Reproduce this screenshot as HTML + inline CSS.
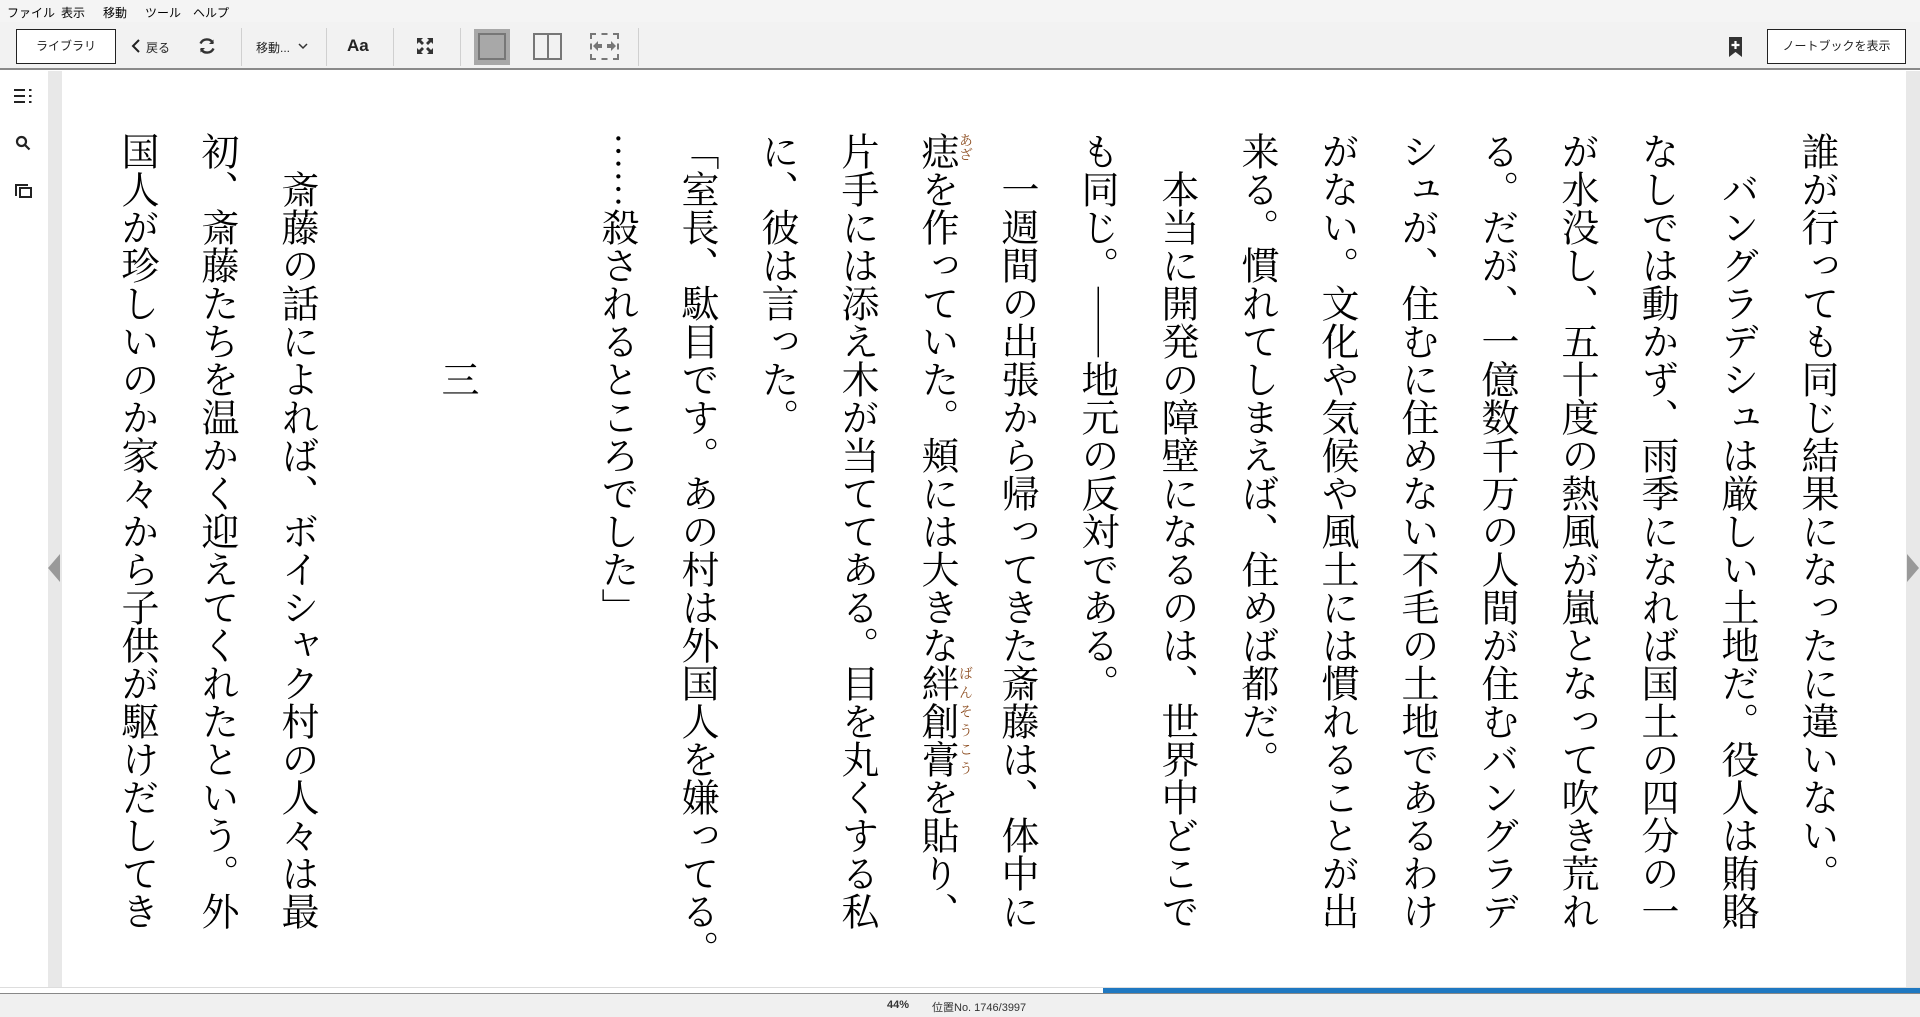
<!DOCTYPE html>
<html><head><meta charset="utf-8">
<style>
*{margin:0;padding:0;box-sizing:border-box}
body{width:1920px;height:1017px;overflow:hidden;background:#fff;font-family:"Liberation Sans","Noto Sans CJK JP",sans-serif;position:relative}
.menu{position:absolute;left:0;top:0;width:1920px;height:22px;background:#f4f4f4;font-size:12px;color:#000}
.menu span{position:absolute;top:4px}
.tb{position:absolute;left:0;top:22px;width:1920px;height:48px;background:#f2f2f2;border-bottom:2px solid #8a8a8a}
.btn{position:absolute;top:7px;height:35px;border:1px solid #222;background:#fff;font-size:12px;text-align:center;line-height:33px;color:#222}
.sep{position:absolute;top:6px;width:1px;height:38px;background:#d0d0d0}
.t{position:absolute;font-size:12px;color:#222}
.side{position:absolute;left:0;top:71px;width:48px;height:917px;background:#fff}
.gs{position:absolute;background:#e8e8e8}
.text{position:absolute;top:132px;right:60px;writing-mode:vertical-rl;font-family:"Noto Serif CJK SC","Noto Serif CJK JP",serif;font-size:38px;line-height:80px;white-space:nowrap;color:#000;height:820px}
.rb{position:absolute;writing-mode:vertical-rl;font-family:"Noto Serif CJK SC",serif;font-size:14px;color:#8b4a1c;line-height:16px;white-space:nowrap}
</style></head><body>
<div class="menu"><span style="left:7px">ファイル</span><span style="left:61px">表示</span><span style="left:103px">移動</span><span style="left:145px">ツール</span><span style="left:193px">ヘルプ</span></div>
<div class="tb">
<div class="btn" style="left:16px;width:100px">ライブラリ</div>
<svg style="position:absolute;left:131px;top:17px" width="10" height="14" viewBox="0 0 10 14"><path d="M8 1L2 7l6 6" stroke="#222" stroke-width="2" fill="none"/></svg>
<div class="t" style="left:146px;top:17px">戻る</div>
<svg style="position:absolute;left:197px;top:14px" width="20" height="20" viewBox="0 0 20 20" fill="none" stroke="#333" stroke-width="2.4"><path d="M16 7A7 7 0 0 0 3.5 7.5"/><path d="M4 13a7 7 0 0 0 12.5-.5"/><path d="M16.5 3.5v4.5h-4.5z" fill="#333" stroke="none"/><path d="M3.5 16.5v-4.5h4.5z" fill="#333" stroke="none"/></svg>
<div class="sep" style="left:241px"></div>
<div class="t" style="left:256px;top:17px">移動...</div>
<svg style="position:absolute;left:298px;top:20px" width="10" height="8" viewBox="0 0 10 8"><path d="M1 2l4 4 4-4" stroke="#333" fill="none" stroke-width="1.5"/></svg>
<div class="sep" style="left:326px"></div>
<div class="t" style="left:347px;top:14px;font-size:17px;font-weight:bold">Aa</div>
<div class="sep" style="left:393px"></div>
<svg style="position:absolute;left:416px;top:15px" width="18" height="18" viewBox="0 0 18 18" fill="#333"><path d="M1 1h6l-2 2 3 3-2 2-3-3-2 2z"/><path d="M17 1v6l-2-2-3 3-2-2 3-3-2-2z"/><path d="M1 17v-6l2 2 3-3 2 2-3 3 2 2z"/><path d="M17 17h-6l2-2-3-3 2-2 3 3 2-2z"/></svg>
<div class="sep" style="left:460px"></div>
<div style="position:absolute;left:474px;top:7px;width:36px;height:36px;background:#a8a8a8"></div>
<div style="position:absolute;left:478px;top:11px;width:28px;height:27px;border:2px solid #777;background:#a8a8a8"></div>
<div style="position:absolute;left:533px;top:11px;width:29px;height:27px;border:2px solid #777"></div>
<div style="position:absolute;left:547px;top:11px;width:2px;height:27px;background:#777"></div>
<div style="position:absolute;left:590px;top:11px;width:29px;height:27px;border:2px dashed #777"></div>
<svg style="position:absolute;left:592px;top:18px" width="25" height="12" viewBox="0 0 25 12" fill="#777"><path d="M1 6l5-5v3h4v4H6v3z"/><path d="M24 6l-5-5v3h-4v4h4v3z"/></svg>
<div class="sep" style="left:638px"></div>
<svg style="position:absolute;left:1729px;top:15px" width="13" height="20" viewBox="0 0 13 20"><path d="M0 0h13v20l-6.5-5L0 20z" fill="#333"/><path d="M6.5 4v8M2.5 8h8" stroke="#fff" stroke-width="2.2"/></svg>
<div class="btn" style="left:1767px;width:139px">ノートブックを表示</div>
</div>
<div class="side"></div>
<svg style="position:absolute;left:14px;top:89px" width="20" height="14" viewBox="0 0 20 14" fill="#222"><rect x="0" y="0" width="11" height="2"/><rect x="0" y="6" width="11" height="2"/><rect x="0" y="12" width="11" height="2"/><rect x="15" y="0" width="2.5" height="2"/><rect x="15" y="6" width="2.5" height="2"/><rect x="15" y="12" width="2.5" height="2"/></svg>
<svg style="position:absolute;left:15px;top:135px" width="16" height="16" viewBox="0 0 16 16" fill="none" stroke="#222" stroke-width="2.2"><circle cx="6.5" cy="6.5" r="4.5"/><path d="M10 10l4.5 4.5"/></svg>
<svg style="position:absolute;left:15px;top:183px" width="17" height="15" viewBox="0 0 17 15" fill="none" stroke="#222" stroke-width="2"><path d="M1 13V2h12"/><rect x="5" y="5" width="11" height="9"/></svg>
<div class="gs" style="left:48px;top:71px;width:14px;height:917px"></div>
<div class="gs" style="left:1906px;top:71px;width:14px;height:917px"></div>
<svg style="position:absolute;left:47px;top:554px" width="14" height="28"><path d="M13 0v28L1 14z" fill="#999"/></svg>
<svg style="position:absolute;left:1906px;top:554px" width="14" height="28"><path d="M1 0v28l12-14z" fill="#999"/></svg>
<div class="text">誰が行っても同じ結果になったに違いない。<br>　バングラデシュは厳しい土地だ。役人は賄賂<br>なしでは動かず、雨季になれば国土の四分の一<br>が水没し、五十度の熱風が嵐となって吹き荒れ<br>る。だが、一億数千万の人間が住むバングラデ<br>シュが、住むに住めない不毛の土地であるわけ<br>がない。文化や気候や風土には慣れることが出<br>来る。慣れてしまえば、住めば都だ。<br>　本当に開発の障壁になるのは、世界中どこで<br>も同じ。――地元の反対である。<br>　一週間の出張から帰ってきた斎藤は、体中に<br>痣を作っていた。頬には大きな絆創膏を貼り、<br>片手には添え木が当ててある。目を丸くする私<br>に、彼は言った。<br>「室長、駄目です。あの村は外国人を嫌ってる。<br>……殺されるところでした」<br>　<br>　　　　　　三<br>　<br>　斎藤の話によれば、ボイシャク村の人々は最<br>初、斎藤たちを温かく迎えてくれたという。外<br>国人が珍しいのか家々から子供が駆けだしてき</div>
<div class="rb" style="left:958px;top:133px">あざ</div>
<div class="rb" style="left:958px;top:666px;letter-spacing:5px">ばんそうこう</div>
<div style="position:absolute;left:0;top:987px;width:1920px;height:1px;background:#ddd"></div>
<div style="position:absolute;left:1103px;top:988px;width:817px;height:5px;background:#1f78c1"></div>
<div style="position:absolute;left:0;top:993px;width:1920px;height:24px;background:#f0f0f0;border-top:1px solid #888"></div>
<div class="t" style="left:887px;top:999px;font-size:11px;color:#333;font-weight:bold">44%</div>
<div class="t" style="left:932px;top:999px;font-size:11px;color:#333">位置No. 1746/3997</div>
</body></html>
